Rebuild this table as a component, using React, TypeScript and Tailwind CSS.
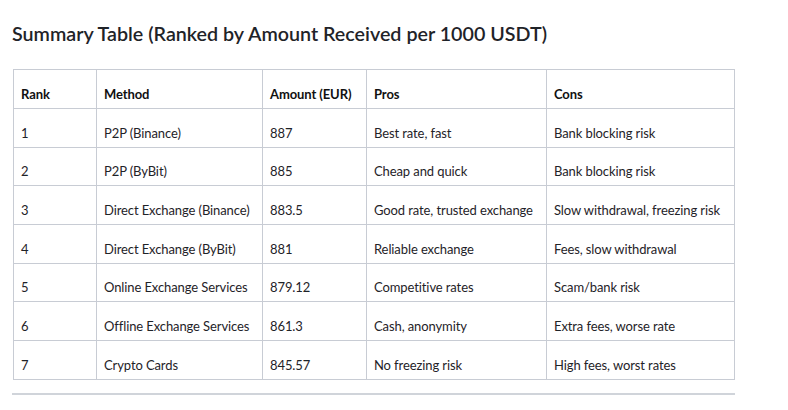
import React from "react";

const rows = [
  ["1", "P2P (Binance)", "887", "Best rate, fast", "Bank blocking risk"],
  ["2", "P2P (ByBit)", "885", "Cheap and quick", "Bank blocking risk"],
  ["3", "Direct Exchange (Binance)", "883.5", "Good rate, trusted exchange", "Slow withdrawal, freezing risk"],
  ["4", "Direct Exchange (ByBit)", "881", "Reliable exchange", "Fees, slow withdrawal"],
  ["5", "Online Exchange Services", "879.12", "Competitive rates", "Scam/bank risk"],
  ["6", "Offline Exchange Services", "861.3", "Cash, anonymity", "Extra fees, worse rate"],
  ["7", "Crypto Cards", "845.57", "No freezing risk", "High fees, worst rates"],
];

export default function App() {
  return (
    <div
      className="w-[788px] h-[410px] bg-white text-[#1f2328] overflow-hidden"
      style={{ fontFamily: 'Lato, "Noto Sans", sans-serif' }}
    >
      <div className="pl-[12px] pt-[21px]">
        <h3 className="text-[19.7px] leading-[26px] font-semibold">
          Summary Table (Ranked by Amount Received per 1000 USDT)
        </h3>
      </div>
      <div className="pl-[13px] pt-[22px]">
        <table className="table-fixed border-collapse w-[721px] text-[13px] tracking-[-0.1px]">
          <colgroup>
            <col className="w-[83px]" />
            <col className="w-[166px]" />
            <col className="w-[104px]" />
            <col className="w-[180px]" />
            <col className="w-[188px]" />
          </colgroup>
          <thead>
            <tr className="h-[39px]">
              {["Rank", "Method", "Amount (EUR)", "Pros", "Cons"].map((h) => (
                <th
                  key={h}
                  className="border border-[#c8ccd4] text-left font-bold px-[7px] pt-[14px] pb-[4px] leading-[18px] text-[#111] whitespace-nowrap"
                >
                  {h}
                </th>
              ))}
            </tr>
          </thead>
          <tbody>
            {rows.map((r) => (
              <tr key={r[0]} className="h-[38.67px]">
                {r.map((c, i) => (
                  <td
                    key={i}
                    className="border border-[#c8ccd4] px-[7px] pt-[14px] pb-[4px] leading-[18px] whitespace-nowrap"
                  >
                    {c}
                  </td>
                ))}
              </tr>
            ))}
          </tbody>
        </table>
      </div>
      <div className="ml-[12px] mt-[13px] w-[723px] h-[2px] bg-[#d0d4da]" />
    </div>
  );
}
